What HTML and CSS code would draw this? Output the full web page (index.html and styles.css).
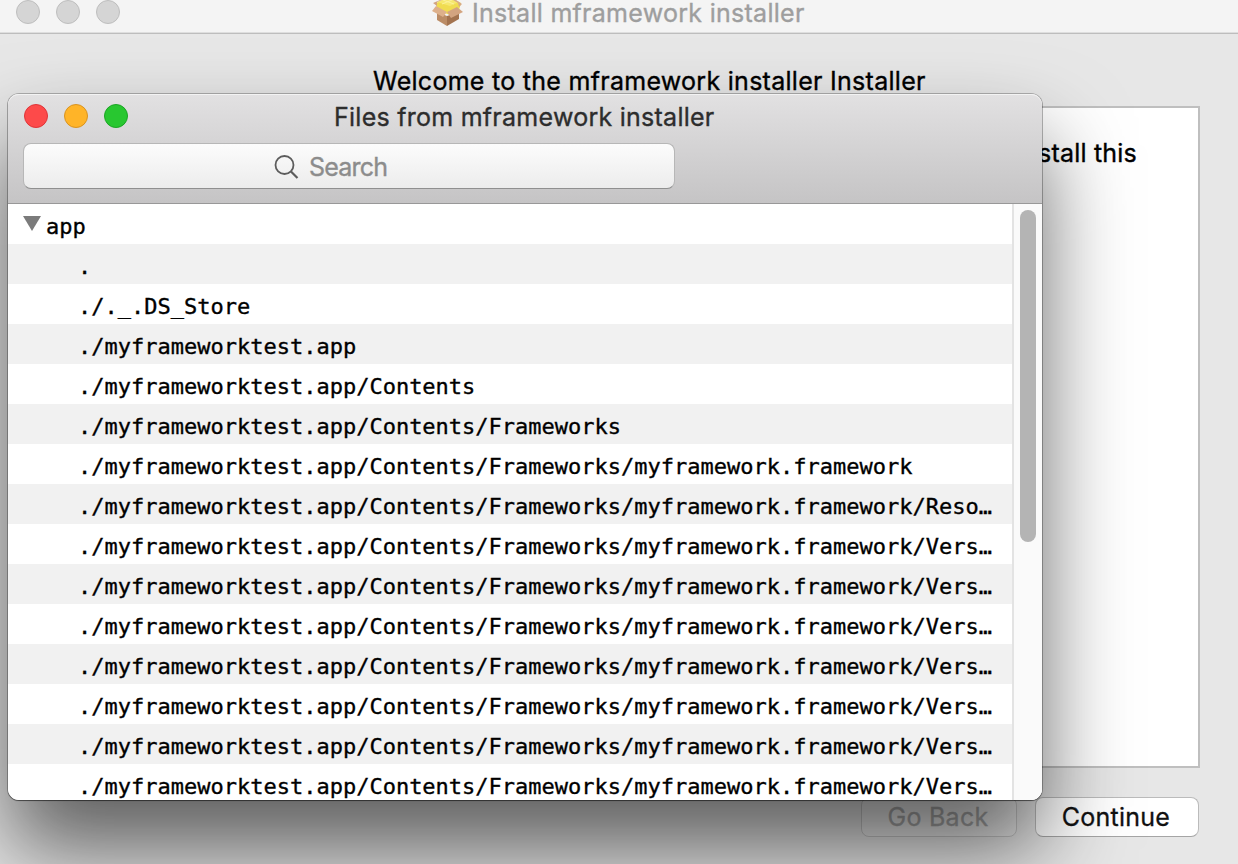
FILE: index.html
```html
<!DOCTYPE html>
<html lang="en">
<head>
<meta charset="utf-8">
<title>Install mframework installer</title>
<link rel="stylesheet" href="styles.css">
</head>
<body>
<main class="desktop">
  <section class="installer">
    <header class="installer-bar">
      <div class="lights"><i class="light"></i><i class="light"></i><i class="light"></i></div>
      <svg class="package" width="32" height="28" viewBox="0 0 32 28">
        <path d="M4 3 11 0H23L29 3 27 10 18 15 5 10Z" fill="#f0dc50"/>
        <path d="M5 2 10 0H23L27 2 18 6Z" fill="#f6e86e"/>
        <path d="M11 0 22 4M20 0 10 4" fill="none" stroke="#fbf19a"/>
        <path d="M5 12 15 16V26L5 20Z" fill="#bb8c66"/>
        <path d="M15 16 27 12V19L15 26Z" fill="#a3734f"/>
        <path d="M4 6 0 11 11 17 15 12Z" fill="#ddb08b"/>
        <path d="M15 12 25 7 31 12 19 18Z" fill="#d3a480"/>
        <path d="M24 0 30 4 27 7 26 3 21 0Z" fill="#d8ab86"/>
        <path d="M5 6 1 3 8 0H10L5 2Z" fill="#d3a582"/>
      </svg>
      <span class="installer-title">Install mframework installer</span>
    </header>
    <h1 class="welcome">Welcome to the mframework installer Installer</h1>
    <div class="content"><span class="intro">install this</span></div>
    <footer class="actions">
      <button class="button button-disabled"><span>Go Back</span></button>
      <button class="button"><span>Continue</span></button>
    </footer>
  </section>

  <section class="files">
    <header class="toolbar">
      <div class="files-bar">
        <div class="lights"><i class="light red"></i><i class="light yellow"></i><i class="light green"></i></div>
        <span class="files-title">Files from mframework installer</span>
      </div>
      <div class="search">
        <svg width="26" height="26" viewBox="0 0 26 26" fill="none" stroke="#5c5c5c" stroke-width="1.8"><circle cx="10.5" cy="11" r="9"/><path d="M17 17.5 23.5 24" stroke-width="2.2"/></svg>
        <span class="search-text">Search</span>
      </div>
    </header>
    <div class="list">
      <div class="rows">
        <div class="row root"><svg class="arrow" width="18" height="15" viewBox="0 0 18 15"><path d="M0 0H18L9 15Z" fill="#7b7b7b"/></svg><span>app</span></div>
        <div class="row">.</div>
        <div class="row">./._.DS_Store</div>
        <div class="row">./myframeworktest.app</div>
        <div class="row">./myframeworktest.app/Contents</div>
        <div class="row">./myframeworktest.app/Contents/Frameworks</div>
        <div class="row">./myframeworktest.app/Contents/Frameworks/myframework.framework</div>
        <div class="row">./myframeworktest.app/Contents/Frameworks/myframework.framework/Reso…</div>
        <div class="row">./myframeworktest.app/Contents/Frameworks/myframework.framework/Vers…</div>
        <div class="row">./myframeworktest.app/Contents/Frameworks/myframework.framework/Vers…</div>
        <div class="row">./myframeworktest.app/Contents/Frameworks/myframework.framework/Vers…</div>
        <div class="row">./myframeworktest.app/Contents/Frameworks/myframework.framework/Vers…</div>
        <div class="row">./myframeworktest.app/Contents/Frameworks/myframework.framework/Vers…</div>
        <div class="row">./myframeworktest.app/Contents/Frameworks/myframework.framework/Vers…</div>
        <div class="row">./myframeworktest.app/Contents/Frameworks/myframework.framework/Vers…</div>
      </div>
      <div class="scrollbar"><div class="thumb"></div></div>
    </div>
  </section>
</main>
</body>
</html>
```
FILE: styles.css
```css
* { box-sizing: border-box; }
body { margin: 0; font-family: Inter, "Liberation Sans", sans-serif; -webkit-text-stroke: 0.35px currentColor; }
.desktop { position: relative; width: 1238px; height: 864px; overflow: hidden; background: #e7e7e7; }
.installer { height: 864px; display: flex; flex-direction: column; }
.installer-bar { height: 34px; flex: none; display: flex; align-items: flex-start; background: #f4f4f4; border-bottom: 1px solid #bdbdbd; box-shadow: inset 0 -1px #dedede; }
.lights { display: flex; gap: 16px; padding-left: 16px; }
.light { width: 24px; height: 24px; border-radius: 50%; background: #d5d5d5; border: 1px solid #bebebe; }
.red { background: #fd4a4a; border-color: #df3438; }
.yellow { background: #ffb428; border-color: #d99320; }
.green { background: #28c730; border-color: #1ba524; }
.package { margin-left: 312px; }
.installer-title { font-size: 25px; line-height: 26px; margin-left: 8px; letter-spacing: 0.28px; color: #9e9e9e; white-space: nowrap; }
.welcome { margin: 32px 0 0; padding-left: 373px; font-size: 25px; font-weight: 400; line-height: 30px; height: 40px; white-space: nowrap; color: #000; letter-spacing: 0.28px; }
.content { width: 1160px; height: 662px; margin-left: 40px; border: 2px solid #bfbfbf; background: #fff; display: flex; justify-content: flex-end; padding: 30px 61px; }
.intro { font-size: 25px; line-height: 30px; white-space: nowrap; letter-spacing: 0.2px; }
.actions { display: flex; justify-content: flex-end; gap: 18px; padding: 29px 39px 0 0; }
.button { width: 164px; height: 40px; padding: 0 2px 0 0; border: 1px solid #bbb; border-bottom-color: #a5a5a5; border-radius: 8px; background: #fff; color: #111; font: 25px/36px Inter, sans-serif; letter-spacing: 0.25px; -webkit-text-stroke: 0.3px currentColor; }
.button-disabled { width: 156px; background: #ececec; color: #aaa; border-color: #c8c8c8; }
.files { position: absolute; left: 8px; top: 94px; width: 1034px; height: 706px; border-radius: 11px; display: flex; flex-direction: column; box-shadow: 0 0 0 1px rgba(0,0,0,.25), 0 1px 1px rgba(0,0,0,.4), 0 50px 88px rgba(0,0,0,.6); }
.toolbar { height: 110px; flex: none; border-radius: 11px 11px 0 0; background: linear-gradient(#e2e1e2, #c5c4c5); border-bottom: 1px solid #989898; box-shadow: inset 0 1px #f3f3f3; padding-top: 7px; }
.files-bar { height: 42px; display: flex; align-items: flex-start; }
.files-bar .lights { padding-top: 3px; }
.files-title { font-size: 25px; line-height: 32px; margin-left: 206px; letter-spacing: 0.26px; color: #2d2d2d; white-space: nowrap; }
.search { width: 652px; height: 46px; margin-left: 15px; border: 1px solid #b7b7b7; border-bottom-color: #8f8f8f; border-radius: 8px; background: linear-gradient(#fcfcfc, #ececec); display: flex; align-items: center; padding: 2px 0 0 250px; gap: 9px; color: #8c8c8c; }
.search-text { font-size: 25px; line-height: 30px; letter-spacing: -0.8px; }
.list { flex: 1; min-height: 0; display: flex; overflow: hidden; border-radius: 0 0 11px 11px; background: #fff; }
.rows { width: 1004px; }
.row { height: 40px; padding: 3px 0 0 70px; font: 22px/40px "DejaVu Sans Mono", monospace; color: #000; white-space: pre; }
.row:nth-child(even) { background: #f1f1f1; }
.root { display: flex; padding-left: 15px; gap: 5px; }
.arrow { margin-top: 9px; }
.scrollbar { width: 30px; border-left: 2px solid #e3e3e3; background: #fafafa; padding: 6px 0 0 6px; }
.thumb { width: 16px; height: 332px; border-radius: 8px; background: #b4b4b4; }
```
